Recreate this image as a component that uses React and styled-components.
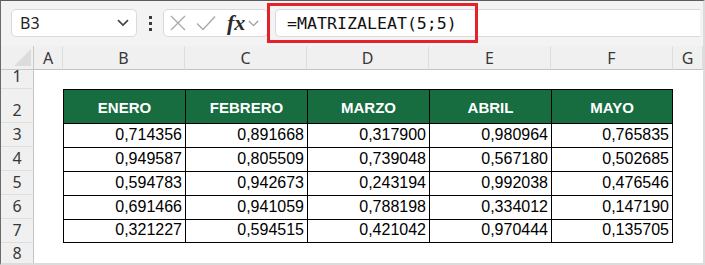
import React from "react";
import styled, { createGlobalStyle } from "styled-components";

const Global = createGlobalStyle`
  html, body { margin: 0; padding: 0; background: #fff; }
  body { overflow: hidden; font-family: "Noto Sans", "Liberation Sans", sans-serif; }
`;

const Frame = styled.div`
  position: relative;
  width: 705px;
  height: 265px;
  box-sizing: border-box;
  border-top: 1px solid #5c5c5c;
  border-left: 1px solid #6a6a6a;
  border-right: 2px solid #dcdcdc;
  border-bottom: 2px solid #dcdcdc;
  overflow: hidden;
  background: #fff;
`;

const Toolbar = styled.div`
  height: 45px;
  box-sizing: border-box;
  background: #f3f3f3;
  display: flex;
  align-items: center;
  padding: 0 0 1px 10px;
`;

const Box = styled.div`
  height: 28px;
  box-sizing: border-box;
  background: #fff;
  border: 1px solid #dadada;
  border-radius: 5px;
  display: flex;
  align-items: center;
`;

const NameBox = styled(Box)`
  width: 126px;
  padding: 0 7px 0 8px;
  justify-content: space-between;
  font-size: 16px;
  color: #1f1f1f;
`;

const Dots = styled.div`
  width: 26px;
  display: flex;
  flex-direction: column;
  align-items: center;
  gap: 3px;
  & span {
    width: 3px;
    height: 3px;
    background: #3a3a3a;
  }
`;

const FxBox = styled(Box)`
  width: 105px;
  padding: 0 4px 0 6px;
  gap: 10px;
`;

const Fx = styled.span`
  font-family: "Liberation Serif", "DejaVu Serif", serif;
  font-style: italic;
  font-weight: bold;
  font-size: 22px;
  color: #2b2b2b;
  margin-left: 1px;
  margin-right: -7px;
  line-height: 1;
`;

const FormulaBox = styled(Box)`
  flex: 1;
  margin-left: 7px;
  margin-right: 3px;
  padding-left: 11px;
  font-family: "DejaVu Sans Mono", "Liberation Mono", monospace;
  font-size: 16.6px;
  color: #111;
  border-right: none;
  border-radius: 5px 0 0 5px;
`;

const Highlight = styled.div`
  position: absolute;
  left: 266px;
  top: 2px;
  width: 211px;
  height: 40px;
  box-sizing: border-box;
  border: 3px solid #e3232a;
  pointer-events: none;
`;

const Sheet = styled.div`
  display: grid;
  grid-template-columns: 33px 29px repeat(5, 122px) 1fr;
  grid-template-rows: 24px 19px 34px repeat(5, 24px) 1fr;
  height: 217px;
  font-family: "Liberation Sans", Arial, sans-serif;
`;

const HeadBase = styled.div`
  background: #f0f0f0;
  box-sizing: border-box;
  display: flex;
  justify-content: center;
  font-family: "Noto Sans", "Open Sans", sans-serif;
  font-size: 16px;
  color: #383838;
`;

const Corner = styled(HeadBase)`
  border-right: 1px solid #c8c8c8;
  border-bottom: 1px solid #c8c8c8;
  align-items: flex-end;
  justify-content: flex-end;
  padding: 0 2px 3px 0;
`;

const ColHead = styled(HeadBase)`
  align-items: center;
  border-right: 1px solid #dedede;
  border-bottom: 1px solid #c3c3c3;
  padding-top: 1px;
`;

const RowHead = styled(HeadBase)`
  align-items: flex-end;
  border-right: 1px solid #c3c3c3;
  border-bottom: 1px solid #dedede;
  padding-bottom: 1px;
  line-height: 21px;
`;

const Empty = styled.div`
  background: #fff;
`;

const TableCell = styled.div`
  box-sizing: border-box;
  border-left: 1px solid #000;
  border-top: 1px solid #000;
  border-right: ${(p) => (p.$last ? "1px solid #000" : "none")};
  border-bottom: ${(p) => (p.$bottom ? "1px solid #000" : "none")};
  display: flex;
`;

const HeadCell = styled(TableCell)`
  background: #176c40;
  color: #fff;
  font-weight: bold;
  font-size: 15px;
  align-items: center;
  justify-content: center;
  padding-top: 2px;
`;

const NumCell = styled(TableCell)`
  background: #fff;
  color: #000;
  font-size: 16px;
  align-items: flex-end;
  justify-content: flex-end;
  padding: 0 3px 3px 0;
  line-height: 18px;
`;

const cols = ["A", "B", "C", "D", "E", "F", "G"];
const months = ["ENERO", "FEBRERO", "MARZO", "ABRIL", "MAYO"];
const data = [
  ["0,714356", "0,891668", "0,317900", "0,980964", "0,765835"],
  ["0,949587", "0,805509", "0,739048", "0,567180", "0,502685"],
  ["0,594783", "0,942673", "0,243194", "0,992038", "0,476546"],
  ["0,691466", "0,941059", "0,788198", "0,334012", "0,147190"],
  ["0,321227", "0,594515", "0,421042", "0,970444", "0,135705"],
];

const Chevron = ({ size = 12, color = "#444", w = 1.6 }) => (
  <svg width={size} height={size * 0.6} viewBox="0 0 12 7">
    <path d="M1 1 L6 6 L11 1" fill="none" stroke={color} strokeWidth={w} />
  </svg>
);

export default function App() {
  return (
    <Frame>
      <Global />
      <Toolbar>
        <NameBox>
          <span>B3</span>
          <Chevron />
        </NameBox>
        <Dots>
          <span />
          <span />
          <span />
        </Dots>
        <FxBox>
          <svg width="16" height="16" viewBox="0 0 16 16">
            <path d="M1 1 L15 15 M15 1 L1 15" stroke="#a8a8a8" strokeWidth="1.3" fill="none" />
          </svg>
          <svg width="20" height="16" viewBox="0 0 20 16">
            <path d="M1 8.5 L7 14.5 L19 1.5" stroke="#a8a8a8" strokeWidth="1.3" fill="none" />
          </svg>
          <Fx>fx</Fx>
          <Chevron size={11} color="#9a9a9a" w={1.3} />
        </FxBox>
        <FormulaBox>=MATRIZALEAT(5;5)</FormulaBox>
      </Toolbar>
      <Highlight />
      <Sheet>
        <Corner>
          <svg width="17" height="17" viewBox="0 0 17 17">
            <path d="M17 0 L17 17 L0 17 Z" fill="#dcdcdc" />
          </svg>
        </Corner>
        {cols.map((c) => (
          <ColHead key={c}>{c}</ColHead>
        ))}

        <RowHead>1</RowHead>
        {cols.map((c) => (
          <Empty key={"r1" + c} />
        ))}

        <RowHead>2</RowHead>
        <Empty />
        {months.map((m, i) => (
          <HeadCell key={m} $last={i === 4}>
            {m}
          </HeadCell>
        ))}
        <Empty />

        {data.map((row, r) => (
          <React.Fragment key={r}>
            <RowHead>{r + 3}</RowHead>
            <Empty />
            {row.map((v, i) => (
              <NumCell key={i} $last={i === 4} $bottom={r === 4}>
                {v}
              </NumCell>
            ))}
            <Empty />
          </React.Fragment>
        ))}

        <RowHead>8</RowHead>
        {cols.map((c) => (
          <Empty key={"r8" + c} />
        ))}
      </Sheet>
    </Frame>
  );
}
